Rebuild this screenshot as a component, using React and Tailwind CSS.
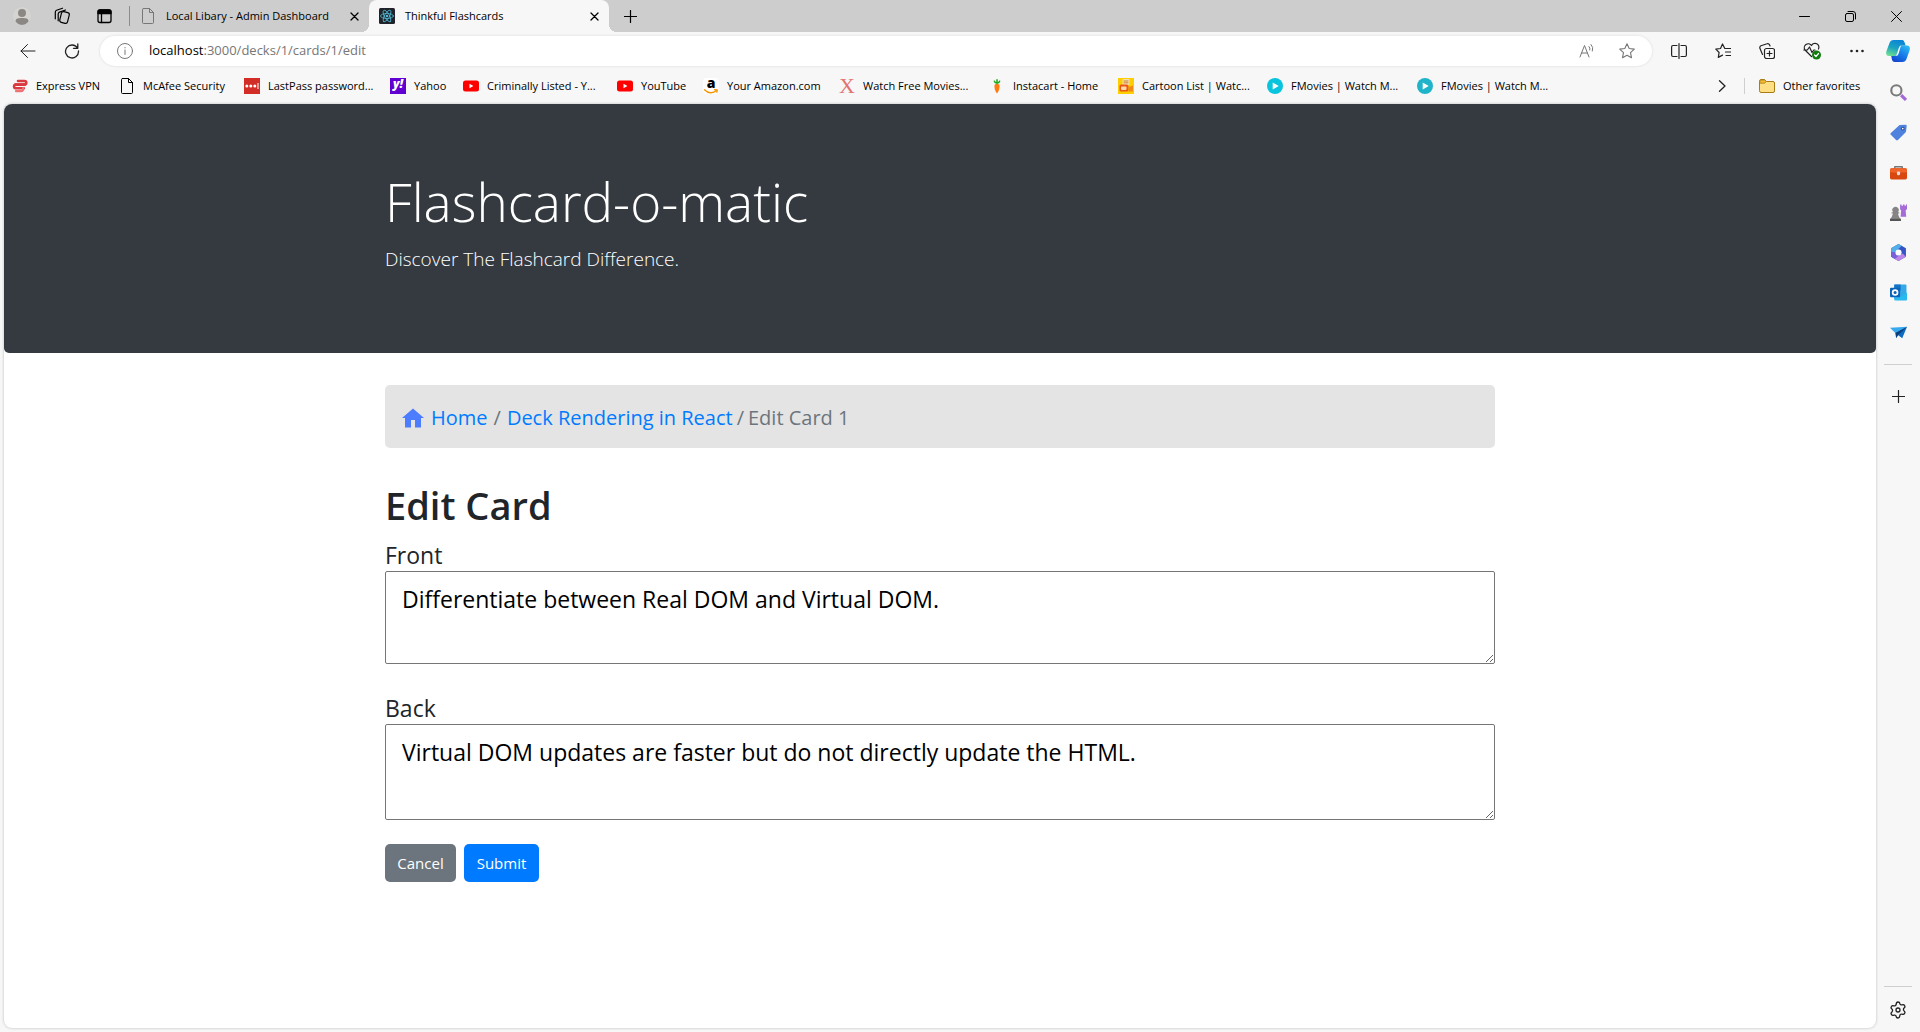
import React from "react";

const line = { fill: "none", stroke: "currentColor", strokeLinecap: "round", strokeLinejoin: "round" };

function Icon({ size = "size-4", box = 16, sw = 1, children }) {
  return (
    <svg className={`${size} shrink-0`} viewBox={`0 0 ${box} ${box}`} strokeWidth={sw} {...line} aria-hidden="true">
      {children}
    </svg>
  );
}

const PageIcon = () => (
  <Icon>
    <path d="M3.5.5h6l4 4v10a1 1 0 0 1-1 1h-9a1 1 0 0 1-1-1v-13a1 1 0 0 1 1-1zM9.500 .5v4h4" />
  </Icon>
);
const Cross = () => (
  <Icon size="size-[9px]" box={9} sw={1.3}>
    <path d="M1 1l7 7M8 1L1 8" />
  </Icon>
);
const Plus = () => (
  <Icon size="size-[13px]" box={13} sw={1.2}>
    <path d="M6.500 .5v12M.5 6.500h12" />
  </Icon>
);

/* ---------- favicons ---------- */
const ExpressVpn = () => (
  <Icon>
    <path d="M6 3h6.500a1.800 1.800 0 0 1 0 3.600H3.500" stroke="#da3940" strokeWidth="2.600" />
    <path d="M12.500 6.600H3.300a1.900 1.900 0 0 0 0 3.600h8.500" stroke="#da3940" strokeWidth="2.600" />
    <path d="M11 10.200c.8 1.800-.5 3-2 3H4" stroke="#ee7377" strokeWidth="2.200" />
  </Icon>
);
const LastPass = () => (
  <Icon>
    <rect width="16" height="16" fill="#d32d27" stroke="none" />
    <g fill="#fff" stroke="none">
      <circle cx="2.800" cy="8" r="1.500" />
      <circle cx="6.800" cy="8" r="1.500" />
      <circle cx="10.800" cy="8" r="1.500" />
      <rect x="13.500" y="5" width="1" height="6" />
    </g>
  </Icon>
);
const Yahoo = () => (
  <span className="flex size-4 shrink-0 items-center justify-center bg-[#6001d2] pb-1 text-xs leading-4 font-extrabold text-white italic">y!</span>
);
const YouTube = () => (
  <Icon>
    <rect y="2.500" width="16" height="11" rx="2.500" fill="#f00" stroke="none" />
    <path d="M6.500 5.800v4.400L10.400 8z" fill="#fff" stroke="none" />
  </Icon>
);
const Amazon = () => (
  <span className="flex size-4 shrink-0 flex-col items-center rounded-sm bg-white">
    <span className="h-[11px] text-sm leading-[10px] font-extrabold text-black">a</span>
    <svg className="h-[5px] w-4" viewBox="0 0 16 5" {...line} stroke="#f79400" strokeWidth="1.300" aria-hidden="true">
      <path d="M1.500 .8C5 4.600 10 4.600 13.500 1.600M11.500 .7l2.800.2-.4 2.200" />
    </svg>
  </span>
);
const LetterX = () => (
  <span className="flex size-4 shrink-0 items-center justify-center font-['Liberation_Serif',serif] text-[22px] leading-4 text-[#e2736f]">X</span>
);
const Carrot = () => (
  <Icon>
    <path d="M8 15.500C6 13 5 9.500 5.600 7 6 5.600 10 5.600 10.400 7 11 9.500 10 13 8 15.500z" fill="#ff7a0f" stroke="none" />
    <path d="M8 5.500V1.800M8 5C6.700 5 5.700 4.200 5.400 3.200M8 5c1.300 0 2.300-.8 2.600-1.800" stroke="#1ca81c" strokeWidth="1.500" />
  </Icon>
);
const Cartoon = () => (
  <Icon>
    <rect width="16" height="16" fill="#fdcf00" stroke="none" />
    <rect x="4.500" y="1" width="7" height="6" rx="1" fill="#f6dcae" stroke="none" />
    <path d="M6 3h4M6 4.800h4" stroke="#c9843c" />
    <rect x="1.500" y="6.500" width="9" height="7" rx="1.500" fill="#e8591c" stroke="none" />
    <rect x="3" y="8.500" width="5.500" height="3.500" rx="1" fill="#ffd9a6" stroke="none" />
    <path d="M10.500 9l4.500-1.500v6h-4.500z" fill="#f08a12" stroke="none" />
  </Icon>
);
const Play = ({ color }) => (
  <Icon>
    <circle cx="8" cy="8" r="8" fill={color} stroke="none" />
    <path d="M5.700 4.400v7.200L11.700 8z" fill="#fff" stroke="none" />
  </Icon>
);
const ReactTile = () => (
  <Icon>
    <rect width="16" height="16" rx="1.500" fill="#20232a" stroke="none" />
    <g stroke="#4fb9d6" strokeWidth=".8">
      <ellipse cx="8" cy="8" rx="6.500" ry="2.500" />
      <ellipse cx="8" cy="8" rx="6.500" ry="2.500" transform="rotate(60 8 8)" />
      <ellipse cx="8" cy="8" rx="6.500" ry="2.500" transform="rotate(120 8 8)" />
    </g>
    <circle cx="8" cy="8" r="1.300" fill="#4fb9d6" stroke="none" />
  </Icon>
);
const Folder = () => (
  <Icon>
    <path d="M.5 3a1.500 1.500 0 0 1 1.500-1.500h3.500L7.500 3.500H14A1.500 1.500 0 0 1 15.500 5v8a1.500 1.500 0 0 1-1.500 1.500H2A1.500 1.500 0 0 1 .5 13z" fill="#ffdf83" stroke="#a97c17" />
    <path d="M1 5.200h4.500L7.500 3.500 5.500 2H2a1 1 0 0 0-1 1z" fill="#f2bc35" stroke="#a97c17" strokeWidth=".8" />
  </Icon>
);

const bookmarks = [
  { label: "Express VPN", icon: <ExpressVpn />, w: "w-[107px]" },
  { label: "McAfee Security", icon: <PageIcon />, w: "w-[125px]" },
  { label: "LastPass password...", icon: <LastPass />, w: "w-[146px]" },
  { label: "Yahoo", icon: <Yahoo />, w: "w-[73px]" },
  { label: "Criminally Listed - Y...", icon: <YouTube />, w: "w-[154px]" },
  { label: "YouTube", icon: <YouTube />, w: "w-[86px]" },
  { label: "Your Amazon.com", icon: <Amazon />, w: "w-[136px]" },
  { label: "Watch Free Movies...", icon: <LetterX />, w: "w-[150px]" },
  { label: "Instacart - Home", icon: <Carrot />, w: "w-[129px]" },
  { label: "Cartoon List | Watc...", icon: <Cartoon />, w: "w-[149px]" },
  { label: "FMovies | Watch M...", icon: <Play color="#08c4dd" />, w: "w-[150px]" },
  { label: "FMovies | Watch M...", icon: <Play color="#1fb4ca" />, w: "w-[150px]" },
];

/* ---------- window chrome ---------- */
function TabStrip() {
  return (
    <header className="flex h-8 items-center bg-[#cdcdcd] text-[11px]">
      <button aria-label="Profile" className="ml-[13px] flex size-[18px] items-center justify-center overflow-hidden rounded-full bg-[#d6d4d1]">
        <svg className="size-[18px]" viewBox="0 0 18 18" fill="#8b8784" aria-hidden="true">
          <circle cx="9" cy="6" r="4" />
          <path d="M2.500 14.500c0-3 2-3.500 6.500-3.500s6.500.5 6.500 3.500L12 18H6z" />
        </svg>
      </button>
      <button aria-label="Workspaces" className="ml-[22px]">
        <Icon size="size-[18px]" box={18} sw={1.2}>
          <rect x="7.500" y="5" width="8" height="11" rx="2" transform="rotate(14 11.500 10.500)" />
          <path d="M5.200 13.800V7a2 2 0 0 1 1.300-1.900L12.500 3M2.300 11.800V5.200a2 2 0 0 1 1.300-1.900L9.500 1.200" />
        </Icon>
      </button>
      <button aria-label="Tab actions" className="ml-6">
        <Icon size="size-[18px]" box={18} sw={1.300}>
          <rect x="3" y="3" width="13" height="12.500" rx="2" />
          <path d="M3 5a2 2 0 0 1 2-2h9a2 2 0 0 1 2 2v1.500H3z" fill="currentColor" />
          <path d="M6.500 6.500v9" />
        </Icon>
      </button>
      <span className="ml-4 h-5 w-px bg-[#8c8c8c]" />
      <div className="ml-2.5 flex w-[221px] items-center text-black">
        <span className="flex text-[#777]"><PageIcon /></span>
        <span className="ml-2.5 w-[170px] overflow-hidden whitespace-nowrap">Local Libary - Admin Dashboard</span>
        <button aria-label="Close tab" className="ml-3.5"><Cross /></button>
      </div>
      <span className="size-2 self-end bg-[radial-gradient(circle_at_0_0,transparent_8px,#f7f7f7_8px)]" />
      <div className="flex w-60 items-center self-stretch rounded-t-lg bg-[#f7f7f7] px-2.5 text-black">
        <ReactTile />
        <span className="ml-2.5 grow">Thinkful Flashcards</span>
        <button aria-label="Close tab"><Cross /></button>
      </div>
      <span className="size-2 self-end bg-[radial-gradient(circle_at_100%_0,transparent_8px,#f7f7f7_8px)]" />
      <button aria-label="New tab" className="ml-[7px]"><Plus /></button>
      <div className="mr-[18px] ml-auto flex items-center gap-[35px]">
        <button aria-label="Minimize"><Icon size="size-[11px]" box={11}><path d="M.5 5.500h10" /></Icon></button>
        <button aria-label="Restore">
          <Icon size="size-[11px]" box={11}>
            <rect x=".5" y="2.500" width="8" height="8" rx="1.500" />
            <path d="M3 .5h5a2.500 2.500 0 0 1 2.500 2.500v5" />
          </Icon>
        </button>
        <button aria-label="Close"><Icon size="size-[11px]" box={11}><path d="M.5.5l10 10M10.500 .5l-10 10" /></Icon></button>
      </div>
    </header>
  );
}

function Copilot() {
  return (
    <svg className="size-6" viewBox="0 0 24 24" aria-hidden="true">
      <defs>
        <linearGradient id="cpA" x1="0.600" y1="0" x2="0.200" y2="1">
          <stop offset="0" stopColor="#0a84d8" />
          <stop offset="0.500" stopColor="#1ba3c0" />
          <stop offset="1" stopColor="#6fe08f" />
        </linearGradient>
        <linearGradient id="cpB" x1="1" y1="0" x2="0.300" y2="1">
          <stop offset="0" stopColor="#2fc3f5" />
          <stop offset="0.600" stopColor="#1778e8" />
          <stop offset="1" stopColor="#1546d0" />
        </linearGradient>
      </defs>
      <path d="M16.500 23H9c-1.800 0-2.500-1-3-2.300L5 16h5l3-9.500h8c2.500 0 3.200 2 2.700 4.500L20.500 20c-.7 2-2 3-4 3z" fill="url(#cpB)" />
      <path d="M7.500 1h8.700c1.300 0 1.800 1 2.300 2.300l1.100 3.200H16c-1.700 0-2.500.8-3 2.300L11 14.500c-.5 1.700-1.300 2.500-3 2.500H3C.5 17-.2 15 .3 12.500L3.500 4C4.200 2 5.500 1 7.500 1z" fill="url(#cpA)" />
      <path d="M12.800 9c.5-1.600 1.300-2.500 2.700-2.500-.7.500-1 1.300-1.300 2.500l-1.600 5.500c-.5 1.700-1.300 2.500-3 2.500H8.500c1.300 0 2-.8 2.500-2.500z" fill="#fff" />
    </svg>
  );
}

const star = "M8 .8l2.200 4.700 5.100.6-3.800 3.500 1 5.100L8 12.200l-4.500 2.500 1-5.100L.7 6.100l5.100-.6z";

function Toolbar() {
  return (
    <div className="flex h-10 items-start pt-1 pr-2.5 pl-5">
      <div className="flex h-[30px] items-center gap-7 text-[#222]">
        <button aria-label="Back"><Icon><path d="M15 8H1M7.500 1.500L1 8l6.500 6.500" /></Icon></button>
        <button aria-label="Refresh"><Icon sw={1.300}><path d="M13.500 5A6.500 6.500 0 1 0 14.500 8M13.800 1v4.300H9.500" /></Icon></button>
      </div>
      <div className="ml-5 flex h-[30px] grow items-center rounded-full bg-white pr-[17px] pl-[17px] shadow-[0_0_3px_rgba(0,0,0,0.12)]">
        <button aria-label="Site information" className="text-[#777]">
          <Icon><circle cx="8" cy="8" r="7.500" /><path d="M8 7v4.500M8 4.500v.4" /></Icon>
        </button>
        <div className="ml-4 flex grow items-center text-[13px] text-black">
          <span>localhost</span><span className="text-[#767676]">:3000/decks/1/cards/1/edit</span>
        </div>
        <div className="flex items-center gap-6 text-[#777]">
          <button aria-label="Read aloud">
            <Icon><path d="M1 14L5.500 2.500 10 14M2.500 10h6M10 3.500a3.500 3.500 0 0 1 .8 3.500M12 1.500a6 6 0 0 1 1.400 6.500" /></Icon>
          </button>
          <button aria-label="Add to favorites"><Icon sw={1.100}><path d={star} /></Icon></button>
        </div>
      </div>
      <div className="ml-[19px] flex h-[30px] items-center text-[#222]">
        <div className="flex items-center gap-7">
          <button aria-label="Split screen">
            <Icon sw={1.200}><path d="M6 2.500H2A1.500 1.500 0 0 0 .6 4v8A1.500 1.500 0 0 0 2 13.500h4M10 2.500h4A1.500 1.500 0 0 1 15.400 4v8a1.500 1.500 0 0 1-1.400 1.500h-4M8 .6v14.800" /></Icon>
          </button>
          <button aria-label="Favorites">
            <Icon sw={1.200}><path d="M15.500 5.500H9.800L7.500 1 5.500 5.500.8 6.200l3.300 3.300-.8 4.900 4.200-2.300M10.500 9h5M11 12.500h4.500" /></Icon>
          </button>
          <button aria-label="Collections">
            <Icon sw={1.200}>
              <rect x="5.500" y="5.500" width="10" height="10" rx="2" />
              <path d="M10.500 8v5M8 10.500h5M3.500 11.500L1 5.500a2 2 0 0 1 1-2.700L8 .8a2 2 0 0 1 2.500 1L11 3" />
            </Icon>
          </button>
          <button aria-label="Browser essentials">
            <Icon size="size-[18px]" box={18} sw={1.200}>
              <path d="M8.500 14.500L2 8A3.800 3.800 0 0 1 8.500 3.500 3.800 3.800 0 0 1 15.500 7M.8 8h3.500L6.500 5l2.500 5.500L10.800 8H12" />
              <circle cx="13.500" cy="13" r="4.500" fill="#107c10" stroke="none" />
              <path d="M11.500 13l1.500 1.500 2.500-3" stroke="#fff" />
            </Icon>
          </button>
          <button aria-label="Settings and more">
            <Icon><g fill="currentColor" stroke="none"><circle cx="2.500" cy="8" r="1.300" /><circle cx="8" cy="8" r="1.300" /><circle cx="13.500" cy="8" r="1.300" /></g></Icon>
          </button>
        </div>
        <button aria-label="Copilot" className="ml-[21px]"><Copilot /></button>
      </div>
    </div>
  );
}

function BookmarksBar() {
  return (
    <nav aria-label="Favorites bar" className="flex h-8 items-center pr-3.5 pb-1 pl-3 text-[11px] text-black">
      {bookmarks.map((b, i) => (
        <button key={i} className={`${b.w} flex shrink-0 items-center gap-2 whitespace-nowrap`}>
          {b.icon}
          {b.label}
        </button>
      ))}
      <button aria-label="More favorites" className="ml-auto text-[#222]">
        <Icon size="size-3" box={12} sw={1.300}><path d="M3.500 .8L9 6l-5.500 5.200" /></Icon>
      </button>
      <span className="ml-4 h-4 w-px bg-[#cfcfcf]" />
      <button className="ml-3.5 flex w-[103px] items-center gap-2 whitespace-nowrap"><Folder />Other favorites</button>
    </nav>
  );
}

/* ---------- sidebar ---------- */
const sidebar = [
  ["Search", (
    <>
      <circle cx="6" cy="6" r="4.800" stroke="#7a7a7a" strokeWidth="2" />
      <path d="M10.500 10.500l4.500 4.500" stroke="#a368d8" strokeWidth="3" strokeLinecap="butt" />
    </>
  )],
  ["Shopping", (
    <>
      <path d="M9 1l5.500-.3c.8 0 1.200.5 1.200 1.200L15 7.500 7.500 15c-.6.600-1.200.6-1.800 0L.8 10.200c-.6-.6-.6-1.200 0-1.800z" fill="#4f82dc" stroke="none" />
      <circle cx="12" cy="4.300" r="1.300" fill="#fff" stroke="#28509c" />
    </>
  )],
  ["Tools", (
    <>
      <path d="M4.500 4.500V2.500h7v2" stroke="#777" strokeWidth="1.400" />
      <rect y="4" width="16" height="10.500" rx="1.500" fill="#d8480f" stroke="none" />
      <rect y="4" width="16" height="4" rx="1.500" fill="#f0642a" stroke="none" />
      <rect x="6.500" y="7" width="3" height="3.500" rx="1" fill="#ddd" stroke="none" />
    </>
  )],
  ["Games", (
    <>
      <path d="M9.500 .5h1.300v1.200h1.400V.5h1.500v1.200H15V.5h1V5l-1.300.8.600 6.200H10l.5-6L9.500 5z" fill="#a56bd6" stroke="none" />
      <path d="M0 16v-2l1.500-1.500 1.300-3.500H1.500V7.800H3a3 3 0 1 1 4.400 0h1.300V9H7.400l1.300 3.500 1.500 1.500v2z" fill="#858585" stroke="none" />
      <path d="M0 14h10.200v2H0z" fill="#555" stroke="none" />
    </>
  )],
  ["Microsoft 365", (
    <>
      <path d="M8 0l7 4v8l-7 4-7-4V4z" fill="#3454c8" stroke="none" />
      <path d="M8 0L1 4v5.500L5.500 7 11 1.700z" fill="#55aee6" stroke="none" />
      <path d="M1 7v5l4 2.300L8 11 4.500 8z" fill="#7b5fd8" stroke="none" />
      <path d="M4.500 14L8 16l7-4-3-3-4 2z" fill="#bd86e6" stroke="none" />
      <circle cx="8" cy="8" r="2.900" fill="#fff" stroke="none" />
    </>
  )],
  ["Outlook", (
    <>
      <rect x="4" y=".5" width="11.500" height="14" rx="1" fill="#35a8e8" stroke="none" />
      <path d="M4 .5h6v5.500H4z" fill="#1473c4" stroke="none" />
      <path d="M4 8.500l6 3.500 6-4v6.500a1 1 0 0 1-1 1H5a1 1 0 0 1-1-1z" fill="#28b9ef" stroke="none" />
      <rect y="3.500" width="9.500" height="9" rx="1" fill="#0a63b8" stroke="none" />
      <circle cx="4.800" cy="8" r="2.300" stroke="#fff" strokeWidth="1.600" />
    </>
  )],
  ["Drop", (
    <>
      <path d="M0 3.500L16 2.500 5 8.500z" fill="#38a8ee" stroke="none" />
      <path d="M5 8.500L16 2.500 11.500 13.500z" fill="#0f6cc0" stroke="none" />
      <path d="M5 8.500L16 2.500 7.800 10.300 5.800 13.500z" fill="#0b3f7c" stroke="none" />
    </>
  )],
];

function Sidebar() {
  return (
    <aside className="flex w-11 shrink-0 flex-col items-center text-[#222]">
      {sidebar.map(([name, art]) => (
        <button key={name} aria-label={name} className="flex h-10 items-center"><Icon size="size-[17px]">{art}</Icon></button>
      ))}
      <span className="mt-3 h-px w-7 bg-[#cfcfcf]" />
      <button aria-label="Customize sidebar" className="mt-[25px]"><Plus /></button>
      <span className="mt-auto h-px w-7 bg-[#cfcfcf]" />
      <button aria-label="Settings" className="mt-3.5 mb-[13px]">
        <Icon size="size-[18px]" box={18} sw={1.300}>
          <path d="M9 1c1.200 0 1.700.3 1.900 1.700.2 1 1.300 1.500 2.200 1.100 1.200-.5 1.900-.3 2.500.800.6 1 .5 1.700-.5 2.500-.9.700-.9 2.100 0 2.800 1 .8 1.100 1.500.5 2.500-.6 1.100-1.300 1.300-2.500.8-.9-.4-2 .1-2.200 1.100C10.700 16.700 10.200 17 9 17s-1.700-.3-1.900-1.700c-.2-1-1.300-1.500-2.200-1.100-1.200.5-1.900.3-2.500-.8-.6-1-.5-1.700.5-2.500.9-.7.900-2.100 0-2.800-1-.8-1.100-1.500-.5-2.500.6-1.100 1.300-1.300 2.500-.8.900.4 2-.1 2.200-1.100C7.300 1.300 7.800 1 9 1z" />
          <circle cx="9" cy="9" r="2" />
        </Icon>
      </button>
    </aside>
  );
}

/* ---------- page ---------- */
function Page() {
  return (
    <main className="mb-1 ml-1 grow rounded-lg bg-white text-[#212529] shadow-[0_0_3px_rgba(0,0,0,0.25)]">
      <div className="rounded-t-lg rounded-b-[5px] bg-[#343a40] pt-[62px] pb-[79px] text-white">
        <div className="mx-auto max-w-[1110px]">
          <h1 className="text-[53px] leading-[72px] font-light">Flashcard-o-matic</h1>
          <p className="mt-1.5 text-[19px] leading-[30px] font-light">Discover The Flashcard Difference.</p>
        </div>
      </div>
      <div className="mx-auto mt-8 max-w-[1110px]">
        <nav aria-label="Breadcrumb" className="flex h-[63px] items-center rounded-[5px] bg-[#e4e4e4] px-4 pt-0.5 text-xl text-[#6c757d]">
          <svg className="size-6 shrink-0" viewBox="0 0 24 24" fill="#4c7dff" aria-hidden="true">
            <path d="M12 2.500L1 12h3v9.500h6V14h4v7.500h6V12h3z" />
          </svg>
          <a href="#home" className="ml-1.5 text-[#007bff]">Home</a>
          <span className="mx-1.5">/</span>
          <a href="#deck" className="text-[#007bff]">Deck Rendering in React</a>
          <span className="mx-1">/</span>
          <span>Edit Card 1</span>
        </nav>
        <h2 className="mt-[33px] text-[38px] leading-12 font-semibold">Edit Card</h2>
        <form className="flex flex-col items-start text-[23px]">
          <label htmlFor="front" className="mt-2.5 leading-8">Front</label>
          <textarea id="front" className="h-[93px] w-full resize rounded-xs border border-[#767676] bg-white px-4 py-[9px] leading-9 text-black" defaultValue="Differentiate between Real DOM and Virtual DOM." />
          <label htmlFor="back" className="mt-7 leading-8">Back</label>
          <textarea id="back" className="h-24 w-full resize rounded-xs border border-[#767676] bg-white px-4 py-[9px] leading-9 text-black" defaultValue="Virtual DOM updates are faster but do not directly update the HTML." />
          <div className="mt-6 flex gap-2 text-[15px] text-white">
            <button type="button" className="h-[38px] w-[71px] rounded-[5px] bg-[#6c757d]">Cancel</button>
            <button type="submit" className="h-[38px] w-[75px] rounded-[5px] bg-[#007bff]">Submit</button>
          </div>
        </form>
      </div>
    </main>
  );
}

export default function App() {
  return (
    <div className="flex min-h-screen flex-col bg-[#f7f7f7] font-['Open_Sans',sans-serif]">
      <TabStrip />
      <Toolbar />
      <div className="flex grow">
        <div className="flex min-w-0 grow flex-col">
          <BookmarksBar />
          <Page />
        </div>
        <Sidebar />
      </div>
    </div>
  );
}
